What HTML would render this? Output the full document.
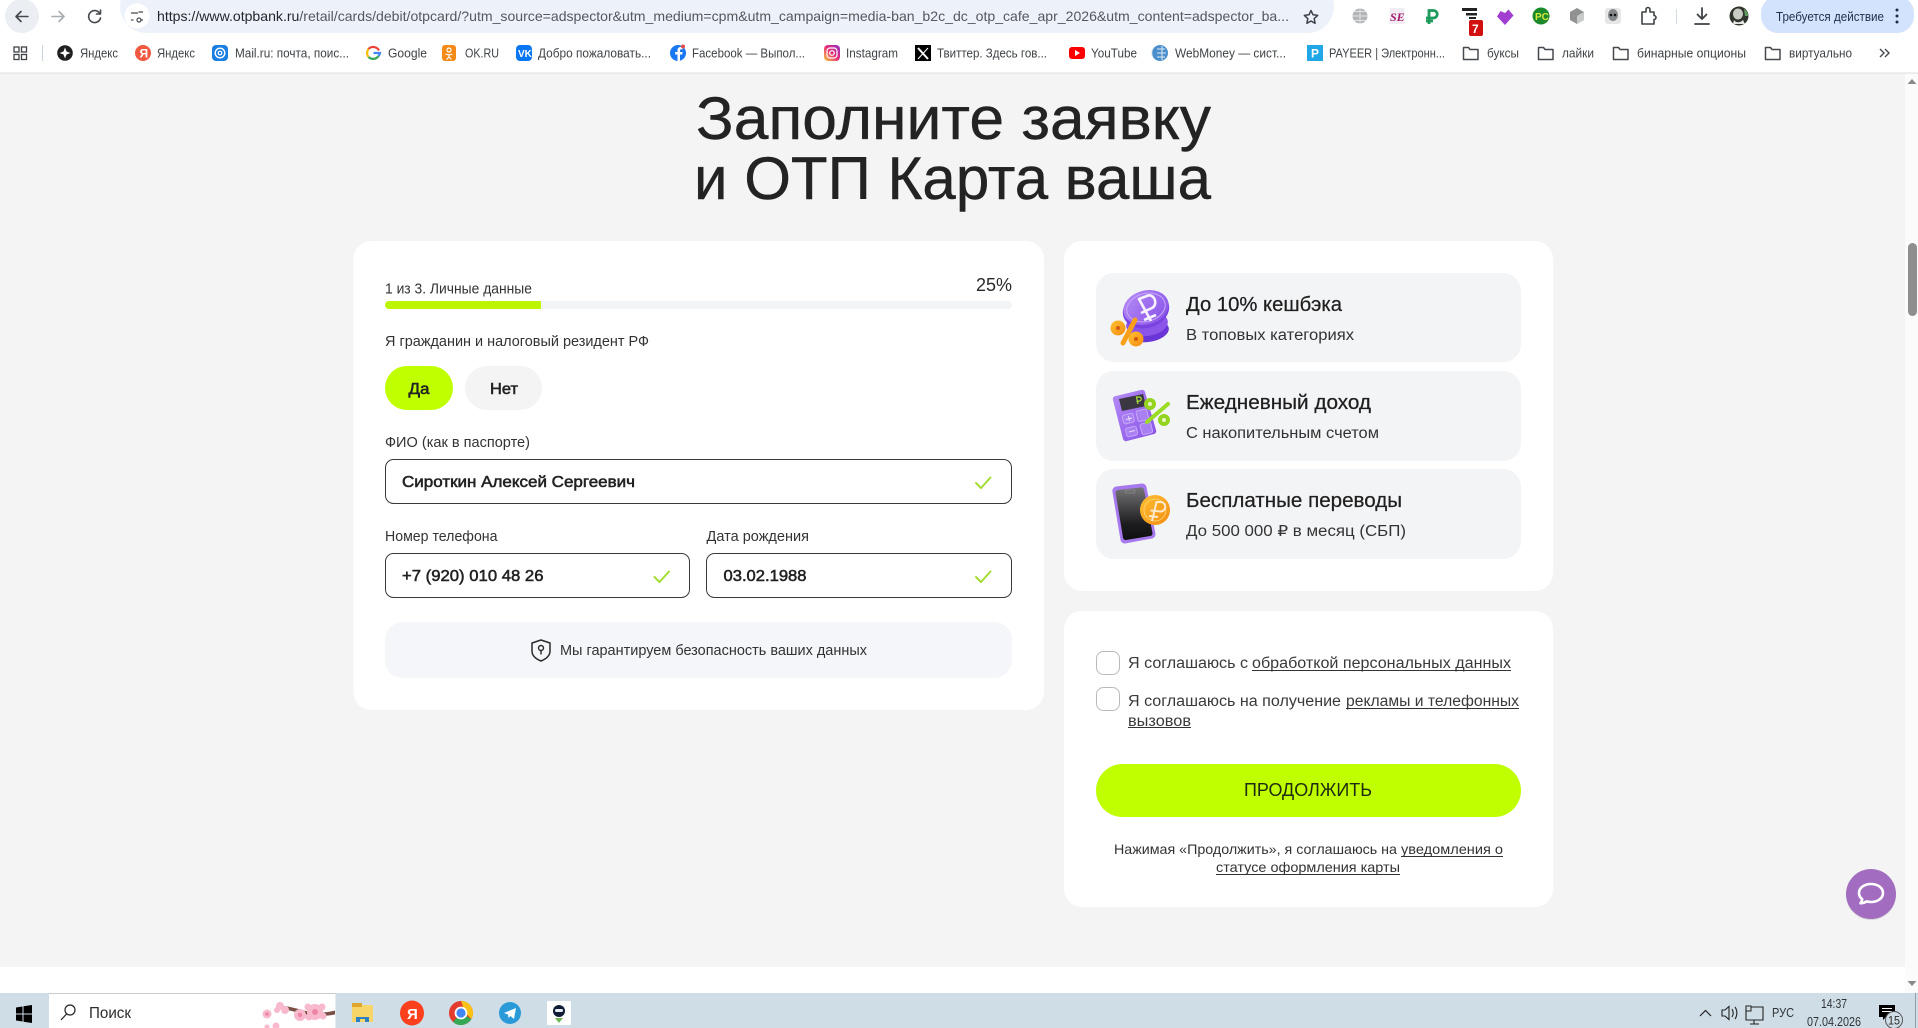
<!DOCTYPE html>
<html lang="ru"><head><meta charset="utf-8"><title>ОТП Карта</title>
<style>
html,body{margin:0;padding:0;width:1918px;height:1028px;overflow:hidden;background:#f4f4f4}
svg{display:block;filter:blur(.3px)}
text{font-family:"Liberation Sans","DejaVu Sans",sans-serif;fill:#2a2a2a;white-space:pre}
.b{font-size:12.5px;fill:#3f4347}
.l{font-size:14.5px;fill:#333}
.v{font-size:16px;fill:#222;stroke:#222;stroke-width:.55px}
.t{font-size:20px;fill:#1f1f1f;stroke:#1f1f1f;stroke-width:.25px}
.s{font-size:15.5px;fill:#333}
.c{font-size:15.5px;fill:#3a3a3a}
.n{font-size:14px;fill:#333}
.i{fill:none;stroke:#5a5e63;stroke-width:1.6;stroke-linecap:round;stroke-linejoin:round}
.f{fill:none;stroke:#46494d;stroke-width:1.5;stroke-linejoin:round}
.u{stroke:#333;stroke-width:1}
.w{fill:none;stroke:#fff;stroke-width:2;stroke-linecap:round;stroke-linejoin:round}
.chk{fill:none;stroke:#a4dc32;stroke-width:2;stroke-linecap:round;stroke-linejoin:round}
.in{fill:#fff;stroke:#3a3a3a;stroke-width:1}
.tb{font-size:12.5px;fill:#2f3336}
</style></head><body>
<svg width="1918" height="1028" viewBox="0 0 1918 1028" xmlns="http://www.w3.org/2000/svg">
<defs>
<linearGradient id="pur" x1="0" y1="0" x2="1" y2="1"><stop offset="0" stop-color="#b68cf5"/><stop offset="1" stop-color="#8650e8"/></linearGradient>
<linearGradient id="org" x1="0" y1="0" x2="1" y2="1"><stop offset="0" stop-color="#ffc233"/><stop offset="1" stop-color="#f48a10"/></linearGradient>
<linearGradient id="scr" x1="0" y1="0" x2="0" y2="1"><stop offset="0" stop-color="#757577"/><stop offset=".7" stop-color="#1c1c1e"/><stop offset="1" stop-color="#0f0f10"/></linearGradient>
<linearGradient id="ins" x1="0" y1="1" x2="1" y2="0"><stop offset="0" stop-color="#f9ce3a"/><stop offset=".5" stop-color="#e92e78"/><stop offset="1" stop-color="#8a2fc4"/></linearGradient>
</defs>

<!-- chrome -->
<rect x="0" y="0" width="1918" height="73" fill="#fff"/>
<rect x="0" y="72.5" width="1918" height="1" fill="#dedfe0"/>
<circle cx="22" cy="16" r="17" fill="#ebeef3"/>
<path class="i" style="stroke:#45494d" d="M28 16.500H16.500M21 11.500 16 16.500 21 21.500"/>
<path class="i" style="stroke:#a9acb0" d="M52 16.500H63.500M59 11.500 64 16.500 59 21.500"/>
<path class="i" style="stroke:#45494d" d="M99.500 13a6 6 0 1 0 1 5M100.500 10v4h-4"/>
<rect x="120" y="-20" width="1214" height="53" rx="26.500" fill="#edf2fa"/>
<circle cx="137" cy="16" r="12.500" fill="#fff"/>
<path class="i" style="stroke:#45494d;stroke-width:1.300" d="M131.500 13h6M131.500 20h1.500M141 20h1.500"/><circle cx="140.500" cy="13" r="1.700" fill="none" stroke="#45494d" stroke-width="1.200" style="display:none"/><path class="i" style="stroke:#45494d;stroke-width:1.300" d="M139 12h3.500"/><circle cx="137.500" cy="20" r="2" fill="none" stroke="#45494d" stroke-width="1.200" transform="translate(1.500 0)"/>
<text x="157" y="21" font-size="14" textLength="1132" lengthAdjust="spacingAndGlyphs" style="fill:#55585c"><tspan style="fill:#24272a">https://www.otpbank.ru</tspan>/retail/cards/debit/otpcard/?utm_source=adspector&amp;utm_medium=cpm&amp;utm_campaign=media-ban_b2c_dc_otp_cafe_apr_2026&amp;utm_content=adspector_ba...</text>
<path d="M1311 10.500l2 4.300 4.700.6-3.500 3.200.9 4.700-4.100-2.300-4.100 2.300.9-4.700-3.500-3.200 4.700-.6z" fill="none" stroke="#3f4347" stroke-width="1.500" stroke-linejoin="round"/>

<!-- extensions -->
<circle cx="1360" cy="16" r="7.500" fill="#b3b5b7"/><path d="M1352.500 16h15M1360 8.500v15M1354 11.500h12M1354 20.500h12" stroke="#e3e4e5" stroke-width=".9"/>
<rect x="1389.500" y="8" width="15" height="16" fill="#f1ecf2"/><text x="1390" y="21" font-size="12" font-style="italic" font-weight="700" style="fill:#a31a6b;font-family:'Liberation Serif',serif">SE</text>
<path d="M1429 24V10.500h4.500a3.500 3.500 0 0 1 0 7.500H1426M1426 21h7" fill="none" stroke="#1d9a5c" stroke-width="2.800"/>
<rect x="1462" y="8" width="15" height="3" fill="#222"/><rect x="1466" y="13" width="11" height="2.500" fill="#222"/><rect x="1469" y="17" width="7" height="2" fill="#222"/>
<rect x="1469" y="20" width="14" height="16" rx="2" fill="#d2100f"/><text x="1472" y="33" font-size="12" font-weight="700" style="fill:#fff">7</text>
<path d="M1505 25l-8-8.500 3.500-5.500 4.500 2 3.500-3.500 5 6z" fill="#a23fd0"/>
<circle cx="1541" cy="16" r="8.500" fill="#1a8a2c"/><text x="1535" y="20" font-size="10" font-weight="700" style="fill:#d9e83a">PC</text>
<path d="M1577 8l7 4v8l-7 4-7-4v-8z" fill="#8f9192"/><path d="M1577 16l7-4v8l-7 4z" fill="#c9caca"/>
<rect x="1605" y="8" width="16" height="16" rx="3" fill="#e6e6e6"/><ellipse cx="1613" cy="15" rx="5" ry="6" fill="#83878a"/><circle cx="1611" cy="15" r="1.300" fill="#111"/><circle cx="1615" cy="15" r="1.300" fill="#111"/>
<path class="i" style="stroke:#3f4347" d="M1642 12h4v-2.500a2 2 0 0 1 4 0V12h4v3.500a2 2 0 0 1 0 4V24h-12z"/>
<rect x="1676" y="9" width="1" height="15" fill="#d5dbe3"/>
<path class="i" style="stroke:#3f4347;stroke-width:1.800" d="M1702 8v11M1697.500 14.500l4.500 4.500 4.500-4.500M1695 24h14"/>
<circle cx="1739" cy="16" r="9.500" fill="#2f352c"/><ellipse cx="1738" cy="14" rx="5" ry="5.500" fill="#c9cbc4"/><path d="M1734 20c2 3 6 3 9 0l2 4h-12z" fill="#e5e6e3"/><path d="M1744 9a8 8 0 0 1 4 7h-3z" fill="#5f9a5e"/>
<rect x="1761" y="-4" width="153" height="37" rx="17" fill="#d3e3fd"/>
<text x="1776" y="21" font-size="12.500" textLength="108" lengthAdjust="spacingAndGlyphs" style="fill:#1f2f4a">Требуется действие</text>
<circle cx="1897" cy="10" r="1.500" fill="#1f2f4a"/><circle cx="1897" cy="16" r="1.500" fill="#1f2f4a"/><circle cx="1897" cy="22" r="1.500" fill="#1f2f4a"/>

<!-- bookmarks -->
<g fill="none" stroke="#3f4347" stroke-width="1.300"><rect x="14" y="47" width="5" height="5"/><rect x="21.500" y="47" width="5" height="5"/><rect x="14" y="54.500" width="5" height="5"/><rect x="21.500" y="54.500" width="5" height="5"/></g>
<rect x="42" y="45" width="1" height="16" fill="#c8d3e0"/>
<circle cx="65" cy="53" r="7.800" fill="#1f1f1f"/><path d="M65 47.500l1.500 4 4 1.500-4 1.500-1.500 4-1.500-4-4-1.500 4-1.500z" fill="#fff"/>
<text class="b" x="80" y="57.500" textLength="38" lengthAdjust="spacingAndGlyphs">Яндекс</text>
<circle cx="143" cy="53" r="8" fill="#f0583f"/><text x="139.500" y="57.500" font-size="12" font-weight="700" style="fill:#fff">Я</text>
<text class="b" x="157" y="57.500" textLength="38" lengthAdjust="spacingAndGlyphs">Яндекс</text>
<rect x="212" y="45" width="16" height="16" rx="4" fill="#1a7fe0"/><circle cx="220" cy="53" r="4.800" fill="none" stroke="#fff" stroke-width="1.400"/><circle cx="220" cy="53" r="1.800" fill="none" stroke="#fff" stroke-width="1.200"/>
<text class="b" x="235" y="57.500" textLength="114" lengthAdjust="spacingAndGlyphs">Mail.ru: почта, поис...</text>
<path d="M379 50.500a6.500 6.500 0 0 0-10.500-1.500" fill="none" stroke="#ea4335" stroke-width="2.200"/><path d="M368.500 49a6.500 6.500 0 0 0 0 8" fill="none" stroke="#fbbc05" stroke-width="2.200"/><path d="M368.500 57a6.500 6.500 0 0 0 10-1" fill="none" stroke="#34a853" stroke-width="2.200"/><path d="M373.500 53h6.500a6.500 6.500 0 0 1-1.500 3" fill="none" stroke="#4285f4" stroke-width="2.200"/>
<text class="b" x="388" y="57.500" textLength="39" lengthAdjust="spacingAndGlyphs">Google</text>
<rect x="442" y="45" width="14" height="16" rx="3" fill="#f58a16"/><circle cx="449" cy="50" r="2" fill="none" stroke="#fff" stroke-width="1.200"/><path d="M445.500 54c2.500 1.200 4.500 1.200 7 0M449 55v2M449 57l-2.500 2.500M449 57l2.500 2.500" fill="none" stroke="#fff" stroke-width="1.200"/>
<text class="b" x="465" y="57.500" textLength="34" lengthAdjust="spacingAndGlyphs">OK.RU</text>
<rect x="516" y="45" width="16" height="16" rx="4" fill="#0a77f2"/><text x="518" y="57" font-size="10" font-weight="700" style="fill:#fff">VK</text>
<text class="b" x="538" y="57.500" textLength="113" lengthAdjust="spacingAndGlyphs">Добро пожаловать...</text>
<circle cx="678" cy="53" r="8" fill="#1877f2"/><path d="M680 61v-6.500h2.200l.4-2.500H680v-1.500c0-.8.3-1.300 1.400-1.300h1.300V47c-2.800-.5-5.200.4-5.200 3.200V52h-2.300v2.500h2.300V61z" fill="#fff"/><circle cx="683" cy="46.500" r="2" fill="#e24a4a"/>
<text class="b" x="692" y="57.500" textLength="113" lengthAdjust="spacingAndGlyphs">Facebook — Выпол...</text>
<rect x="824" y="45" width="16" height="16" rx="4" fill="url(#ins)"/><rect x="827" y="48" width="10" height="10" rx="3" fill="none" stroke="#fff" stroke-width="1.200"/><circle cx="832" cy="53" r="2.300" fill="none" stroke="#fff" stroke-width="1.200"/>
<text class="b" x="846" y="57.500" textLength="52" lengthAdjust="spacingAndGlyphs">Instagram</text>
<rect x="915" y="45" width="16" height="16" fill="#000"/><path d="M918 48l10 11" stroke="#fff" stroke-width="2"/><path d="M928 48l-10 11" stroke="#fff" stroke-width="1"/>
<text class="b" x="937" y="57.500" textLength="110" lengthAdjust="spacingAndGlyphs">Твиттер. Здесь гов...</text>
<rect x="1069" y="47" width="16" height="12" rx="3" fill="#f00"/><path d="M1075 50v6l5-3z" fill="#fff"/>
<text class="b" x="1091" y="57.500" textLength="46" lengthAdjust="spacingAndGlyphs">YouTube</text>
<circle cx="1160" cy="53" r="8" fill="#4a8fcb"/><path d="M1154 47a9 9 0 0 0 0 12M1162 46v14M1157 49h8M1157 53h9M1157 57h8" fill="none" stroke="#dfeaf5" stroke-width="1"/>
<text class="b" x="1175" y="57.500" textLength="111" lengthAdjust="spacingAndGlyphs">WebMoney — сист...</text>
<rect x="1307" y="45" width="16" height="16" fill="#1fa7e8"/><text x="1311" y="57.500" font-size="12" font-weight="700" style="fill:#fff">P</text>
<text class="b" x="1329" y="57.500" textLength="116" lengthAdjust="spacingAndGlyphs">PAYEER | Электронн...</text>
<path class="f" d="M1463.500 47.500h5l1.500 2h8v10h-14.500z"/><text class="b" x="1487" y="57.500" textLength="32" lengthAdjust="spacingAndGlyphs">буксы</text>
<path class="f" d="M1538.500 47.500h5l1.500 2h8v10h-14.500z"/><text class="b" x="1562" y="57.500" textLength="32" lengthAdjust="spacingAndGlyphs">лайки</text>
<path class="f" d="M1613.500 47.500h5l1.500 2h8v10h-14.500z"/><text class="b" x="1637" y="57.500" textLength="109" lengthAdjust="spacingAndGlyphs">бинарные опционы</text>
<path class="f" d="M1765.500 47.500h5l1.500 2h8v10h-14.500z"/><text class="b" x="1789" y="57.500" textLength="63" lengthAdjust="spacingAndGlyphs">виртуально</text>
<path d="M1880 49l4 4-4 4M1885 49l4 4-4 4" fill="none" stroke="#45494d" stroke-width="1.400"/>

<!-- page -->
<rect x="0" y="74" width="1905" height="893" fill="#f4f4f4"/>
<rect x="0" y="967" width="1905" height="26" fill="#fff"/>
<rect x="1905" y="74" width="13" height="919" fill="#fbfbfb"/>
<path d="M1912 79l4.500 5h-9z" fill="#8a8a8a"/><rect x="1908" y="243" width="9" height="73" rx="4.500" fill="#8e8e8e"/><path d="M1912 986l4.500-5h-9z" fill="#8a8a8a"/>

<text x="696" y="139" font-size="60" textLength="515" lengthAdjust="spacingAndGlyphs" style="fill:#232323;stroke:#232323;stroke-width:.4px">Заполните заявку</text>
<text x="694" y="199" font-size="60" textLength="517" lengthAdjust="spacingAndGlyphs" style="fill:#232323;stroke:#232323;stroke-width:.4px">и ОТП Карта ваша</text>

<!-- left card -->
<rect x="353.500" y="241" width="690.500" height="469" rx="18" fill="#fff"/>
<text class="l" x="385" y="293.500" textLength="147" lengthAdjust="spacingAndGlyphs">1 из 3. Личные данные</text>
<text x="976" y="291" font-size="18" textLength="36" lengthAdjust="spacingAndGlyphs">25%</text>
<rect x="385" y="301" width="627" height="8" rx="4" fill="#f3f4f5"/>
<path d="M389 301H541v8H389a4 4 0 0 1 0-8z" fill="#bdf402"/>
<text class="l" x="385" y="346" textLength="264" lengthAdjust="spacingAndGlyphs">Я гражданин и налоговый резидент РФ</text>
<rect x="385" y="366" width="68" height="44" rx="22" fill="#bfff00"/>
<rect x="465" y="366" width="77" height="44" rx="22" fill="#f4f4f4"/>
<text class="v" x="408.500" y="394" textLength="21" lengthAdjust="spacingAndGlyphs" style="font-size:15.500px">Да</text>
<text class="v" x="490" y="394" textLength="28" lengthAdjust="spacingAndGlyphs" style="font-size:15.500px">Нет</text>
<text class="l" x="385" y="447" textLength="145" lengthAdjust="spacingAndGlyphs">ФИО (как в паспорте)</text>
<rect class="in" x="385.500" y="459.500" width="626" height="44" rx="8"/>
<text class="v" x="402" y="487" textLength="233" lengthAdjust="spacingAndGlyphs">Сироткин Алексей Сергеевич</text>
<path class="chk" d="M976 483l5 5 9.500-10.500"/>
<text class="l" x="385" y="541" textLength="112.500" lengthAdjust="spacingAndGlyphs">Номер телефона</text>
<text class="l" x="706.500" y="541" textLength="102.500" lengthAdjust="spacingAndGlyphs">Дата рождения</text>
<rect class="in" x="385.500" y="553.500" width="304" height="44" rx="8"/>
<rect class="in" x="706.500" y="553.500" width="305" height="44" rx="8"/>
<text class="v" x="402" y="581" textLength="141.500" lengthAdjust="spacingAndGlyphs">+7 (920) 010 48 26</text>
<text class="v" x="723.500" y="581" textLength="83" lengthAdjust="spacingAndGlyphs">03.02.1988</text>
<path class="chk" d="M654.500 577l5 5 9.500-10.500"/>
<path class="chk" d="M976 577l5 5 9.500-10.500"/>
<rect x="385" y="622" width="627" height="56" rx="18" fill="#f4f6f9"/>
<path d="M541 640l9 3v8c0 5-4 8-9 10-5-2-9-5-9-10v-8z" fill="none" stroke="#2a2a2a" stroke-width="1.500" stroke-linejoin="round"/><circle cx="541" cy="648" r="2.500" fill="none" stroke="#2a2a2a" stroke-width="1.400"/><path d="M541 650.500v4" stroke="#2a2a2a" stroke-width="1.400"/>
<text class="l" x="560" y="655" textLength="307" lengthAdjust="spacingAndGlyphs">Мы гарантируем безопасность ваших данных</text>

<!-- right card 1 -->
<rect x="1064" y="241" width="489" height="350" rx="18" fill="#fff"/>
<rect x="1096" y="273" width="425" height="89" rx="18" fill="#f3f4f6"/>
<rect x="1096" y="371" width="425" height="90" rx="18" fill="#f3f4f6"/>
<rect x="1096" y="469" width="425" height="90" rx="18" fill="#f3f4f6"/>

<!-- coin icon -->
<ellipse cx="1148" cy="331" rx="21" ry="11" fill="#6a35d6" transform="rotate(-8 1148 331)"/>
<ellipse cx="1147" cy="324" rx="21" ry="12" fill="#8b55ea" transform="rotate(-8 1147 324)"/>
<ellipse cx="1146" cy="310" rx="23.500" ry="18" fill="#7a43e0" transform="rotate(-15 1146 310)"/>
<ellipse cx="1146" cy="307.500" rx="23" ry="17" fill="url(#pur)" transform="rotate(-15 1146 307.500)"/>
<ellipse cx="1146" cy="307.500" rx="19.500" ry="14" fill="none" stroke="#c6a9f8" stroke-width="1" transform="rotate(-15 1146 307.500)"/>
<path d="M1151 321L1139 299 1148 295.500C1155 294 1158 305 1152 308L1141 313M1144 320L1156 315" fill="none" stroke="#f7f2ff" stroke-width="2.600" stroke-linejoin="round"/>
<circle cx="1118" cy="328" r="7.500" fill="url(#org)"/><circle cx="1118" cy="328" r="2" fill="#d45a10"/>
<circle cx="1136" cy="339" r="7.500" fill="url(#org)"/><circle cx="1136" cy="339" r="2" fill="#d45a10"/>
<path d="M1123 343l12-23" stroke="#f9a01b" stroke-width="5" stroke-linecap="round"/>

<!-- calc icon -->
<path d="M1116 396l25-6a3 3 0 0 1 4 2l11 38a3 3 0 0 1-2 4l-27 7a3 3 0 0 1-4-2l-10-39a3 3 0 0 1 3-4z" fill="url(#pur)"/>
<path d="M1119 399l24-5 3 12-24 5z" fill="#3a3740"/>
<path d="M1138 404l-1.500-7h2.500a2 2 0 0 1 .5 4l-3 .5" fill="none" stroke="#a9e23a" stroke-width="1.200"/>
<rect x="1123" y="414" width="11" height="9" rx="2" fill="#a97ff2" stroke="#c5a7f8" transform="rotate(-14 1129 419)"/>
<rect x="1126" y="427" width="11" height="9" rx="2" fill="#a97ff2" stroke="#c5a7f8" transform="rotate(-14 1132 431)"/>
<rect x="1137" y="410" width="11" height="11" rx="2" fill="#a97ff2" stroke="#c5a7f8" transform="rotate(-14 1142 416)"/>
<rect x="1141" y="423" width="11" height="11" rx="2" fill="#a97ff2" stroke="#c5a7f8" transform="rotate(-14 1146 429)"/>
<path d="M1126 419.500l6-1.500M1128.500 416l1 5M1129 432l6-1.500" stroke="#e7dbfd" stroke-width="1"/>
<circle cx="1150" cy="404" r="4" fill="#e9f7c8" stroke="#94d41e" stroke-width="4"/>
<circle cx="1164" cy="420" r="4" fill="#e9f7c8" stroke="#94d41e" stroke-width="4"/>
<path d="M1147 422l21-18" stroke="#9adb24" stroke-width="4" stroke-linecap="round"/>

<!-- phone icon -->
<path d="M1116 487l26-3a4 4 0 0 1 4 3l9 47a4 4 0 0 1-3 4l-27 5a4 4 0 0 1-4-3l-8-48a4 4 0 0 1 3-5z" fill="#a779ee" stroke="#a779ee" stroke-width="1" stroke-linejoin="round"/>
<path d="M1118 490l23-2.500a3 3 0 0 1 3 2l8.500 43.500a3 3 0 0 1-2.500 3l-24 4a3 3 0 0 1-3-2.500l-7.500-45a3 3 0 0 1 2.500-2.500z" fill="url(#scr)"/>
<rect x="1125" y="490" width="10" height="3" rx="1.500" fill="none" stroke="#8a8a8d" stroke-width=".8"/>
<circle cx="1155" cy="510" r="15" fill="url(#org)"/>
<circle cx="1155" cy="510" r="11" fill="none" stroke="#ffd877" stroke-width=".8"/>
<path d="M1152 521l4.500-19h4a4.500 4.500 0 0 1 0 9.500l-10-1M1149 516l9 1" fill="none" stroke="#ffeacb" stroke-width="2" stroke-linejoin="round"/>

<text class="t" x="1186" y="311" textLength="156" lengthAdjust="spacingAndGlyphs">До 10% кешбэка</text>
<text class="s" x="1186" y="340" textLength="168" lengthAdjust="spacingAndGlyphs">В топовых категориях</text>
<text class="t" x="1186" y="409" textLength="185" lengthAdjust="spacingAndGlyphs">Ежедневный доход</text>
<text class="s" x="1186" y="438" textLength="193" lengthAdjust="spacingAndGlyphs">С накопительным счетом</text>
<text class="t" x="1186" y="507" textLength="216" lengthAdjust="spacingAndGlyphs">Бесплатные переводы</text>
<text class="s" x="1186" y="536" textLength="220" lengthAdjust="spacingAndGlyphs">До 500 000 ₽ в месяц (СБП)</text>

<!-- right card 2 -->
<rect x="1064" y="611" width="489" height="296" rx="18" fill="#fff"/>
<rect x="1096.500" y="651.500" width="23" height="23" rx="7" fill="#fff" stroke="#b9b9b9"/>
<rect x="1096.500" y="687.500" width="23" height="23" rx="7" fill="#fff" stroke="#b9b9b9"/>
<text class="c" x="1128" y="668" textLength="120" lengthAdjust="spacingAndGlyphs">Я соглашаюсь с</text>
<text class="c" x="1252" y="668" textLength="259" lengthAdjust="spacingAndGlyphs">обработкой персональных данных</text>
<path class="u" d="M1252 670.500h259"/>
<text class="c" x="1128" y="706" textLength="213" lengthAdjust="spacingAndGlyphs">Я соглашаюсь на получение</text>
<text class="c" x="1346" y="706" textLength="173" lengthAdjust="spacingAndGlyphs">рекламы и телефонных</text>
<path class="u" d="M1346 708.500h173"/>
<text class="c" x="1128" y="726" textLength="63" lengthAdjust="spacingAndGlyphs">вызовов</text>
<path class="u" d="M1128 727.500h63"/>
<rect x="1096" y="764" width="425" height="53" rx="26.500" fill="#bfff00"/>
<text x="1244" y="796" font-size="18" textLength="128" lengthAdjust="spacingAndGlyphs" style="fill:#1f2a10">ПРОДОЛЖИТЬ</text>
<text class="n" x="1114" y="854" textLength="283" lengthAdjust="spacingAndGlyphs">Нажимая «Продолжить», я соглашаюсь на</text>
<text class="n" x="1401" y="854" textLength="102" lengthAdjust="spacingAndGlyphs">уведомления о</text>
<path class="u" d="M1401 856.500h102"/>
<text class="n" x="1216" y="872" textLength="184" lengthAdjust="spacingAndGlyphs">статусе оформления карты</text>
<path class="u" d="M1216 874.500h184"/>

<!-- chat -->
<circle cx="1871" cy="895" r="25" fill="#000" opacity=".12"/>
<circle cx="1871" cy="894" r="25" fill="#a26dc0"/>
<path d="M1871 884c7 0 12 4 12 9s-5 9-12 9c-1.500 0-3-.2-4.500-.6-1.500 1.100-3.500 1.800-6 1.800 1-1.200 1.600-2.600 1.700-4-2-1.600-3.200-3.800-3.200-6.200 0-5 5-9 12-9z" fill="none" stroke="#fff" stroke-width="2.600" stroke-linejoin="round"/>

<!-- taskbar -->
<rect x="0" y="993" width="1918" height="35" fill="#cfdde6"/>
<path d="M16 1007.500l6.500-1v7H16zM23.500 1006.300l8.500-1.300v8.500h-8.500zM16 1014.500h6.500v7l-6.500-1zM23.500 1014.500H32v8.500l-8.500-1.300z" fill="#000"/>
<rect x="49" y="993" width="286.500" height="35" fill="#fff"/><rect x="49" y="993" width="286.500" height="1" fill="#c9ccce"/>
<circle cx="70" cy="1010" r="5" fill="none" stroke="#222" stroke-width="1.200"/><path d="M66.500 1014l-5.500 6" stroke="#222" stroke-width="1.200"/>
<text x="89" y="1018" font-size="15.500" textLength="42" lengthAdjust="spacingAndGlyphs" style="fill:#2d2d2d">Поиск</text>
<path d="M284 1006c8 1 14 3 22 5 10 2 20 2 29-.500v4c-10 2-20 2-30 0-8-2-14-4-21-5z" fill="#7b4f45"/>
<g fill="#f8b9cd"><circle cx="267" cy="1014" r="4.500"/><circle cx="280" cy="1006" r="4"/><circle cx="285" cy="1010" r="4"/><circle cx="277" cy="1010" r="3"/><circle cx="300" cy="1015" r="6"/><circle cx="315" cy="1012" r="8"/><circle cx="308" cy="1007" r="3.500"/><circle cx="322" cy="1007" r="3.500"/><circle cx="323" cy="1016" r="3.500"/><circle cx="309" cy="1017" r="3.500"/><circle cx="276" cy="1026" r="3.500"/><circle cx="267" cy="1027" r="2.500"/></g>
<g fill="#ee86a6"><circle cx="315" cy="1012" r="3"/><circle cx="300" cy="1015" r="2.200"/><circle cx="267" cy="1014" r="1.800"/></g>
<rect x="352" y="1005" width="21" height="17" rx="1" fill="#f7d568"/><rect x="352" y="1003" width="10" height="4" fill="#e0a52c"/><rect x="356" y="1017" width="13" height="5" fill="#2c7fc2"/><rect x="360" y="1019" width="5" height="3" fill="#f7d568"/>
<ellipse cx="412" cy="1013" rx="12" ry="12.500" fill="#fc3f1d"/><text x="407" y="1019" font-size="15" font-weight="700" style="fill:#fff">Я</text>
<circle cx="461" cy="1013" r="12" fill="#e33b2e"/><path d="M461 1013l10.400 6A12 12 0 0 1 453 1022z" fill="#34a853"/><path d="M461 1001a12 12 0 0 1 10.400 18l-6-6z" fill="#fbc116"/><circle cx="461" cy="1013" r="5.500" fill="#4285f4" stroke="#fff" stroke-width="1.800"/>
<circle cx="510" cy="1013" r="11" fill="#2a9bd8"/><path d="M504 1013l12-5-2 11-3.500-3-2 2-.5-3.500z" fill="#fff"/>
<rect x="547" y="1001" width="24" height="24" rx="1" fill="#fff"/><circle cx="559" cy="1011" r="6" fill="#111d36"/><rect x="555" y="1009" width="8" height="3" rx="1.500" fill="#e8eef5"/><path d="M555 1018h8l-4 5z" fill="#6fb556"/>

<path d="M1700 1016l5.500-5.500 5.500 5.500" fill="none" stroke="#222" stroke-width="1.200"/>
<path d="M1722 1010h3l4-3.500v13l-4-3.500h-3zM1732 1009c1.500 2.500 1.500 5.500 0 8M1735 1007c2.500 3.500 2.500 8.500 0 12" fill="none" stroke="#222" stroke-width="1.100"/>
<path d="M1746 1007h17v13h-17zM1754 1020v4M1750 1024h9" fill="none" stroke="#222" stroke-width="1.100"/><rect x="1746" y="1006" width="5" height="5" fill="#cfdde6" stroke="#222"/>
<text class="tb" x="1772" y="1017" textLength="22" lengthAdjust="spacingAndGlyphs">РУС</text>
<text class="tb" x="1821" y="1008" textLength="26" lengthAdjust="spacingAndGlyphs">14:37</text>
<text class="tb" x="1807" y="1026" textLength="54" lengthAdjust="spacingAndGlyphs">07.04.2026</text>
<path d="M1879 1005h16v12h-9l-3 3v-3h-4z" fill="#000"/><path d="M1882 1008.500h10M1882 1011.500h10" stroke="#fff" stroke-width="1"/>
<circle cx="1894" cy="1020" r="8.500" fill="#cfdde6" stroke="#555" stroke-width="1"/><text x="1888" y="1024.500" font-size="12" textLength="12" lengthAdjust="spacingAndGlyphs">15</text>
<rect x="1915" y="993" width="1" height="35" fill="#8fa0ab"/>
</svg>
</body></html>
